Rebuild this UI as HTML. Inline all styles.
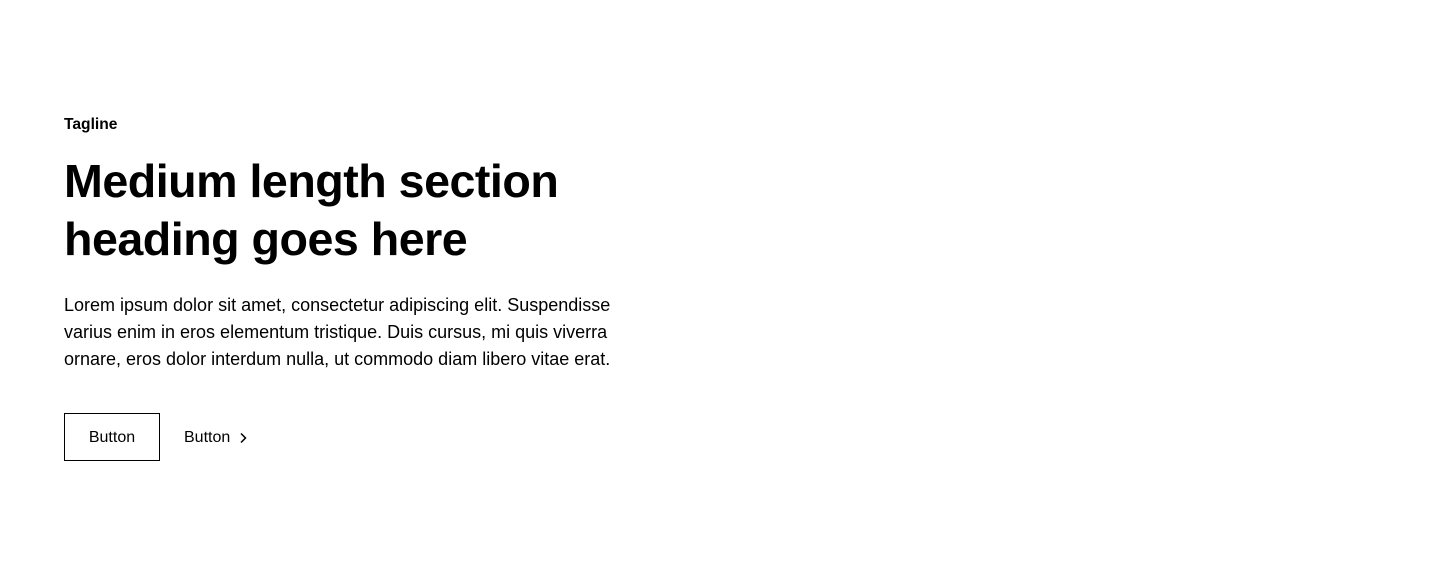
<!DOCTYPE html>
<html><head><meta charset="utf-8"><style>
html,body{margin:0;padding:0;background:#fff;width:1440px;height:573px;overflow:hidden;font-family:"Liberation Sans",Arial,sans-serif;color:#000}
.wrap{position:absolute;left:64px;top:113px}
.tag{font-size:15.6px;font-weight:bold;line-height:24px;margin:0 0 15px}
h1{font-size:46.6px;font-weight:bold;line-height:58px;margin:0 0 24px;white-space:nowrap;letter-spacing:-0.5px}
p{font-size:18px;line-height:27px;margin:0 0 40px;white-space:nowrap}
.btns{display:flex;align-items:center;gap:24px}
.b1{box-sizing:border-box;width:96px;height:48px;border:1px solid #000;display:flex;align-items:center;justify-content:center;font-size:16px;padding-top:1px}
.b2{display:flex;align-items:center;gap:5px;font-size:16px;padding-top:1px}
</style></head><body>
<div class="wrap">
<div class="tag">Tagline</div>
<h1>Medium length section<br>heading goes here</h1>
<p>Lorem ipsum dolor sit amet, consectetur adipiscing elit. Suspendisse<br>varius enim in eros elementum tristique. Duis cursus, mi quis viverra<br>ornare, eros dolor interdum nulla, ut commodo diam libero vitae erat.</p>
<div class="btns"><div class="b1">Button</div><div class="b2">Button <svg width="16" height="16" viewBox="0 0 16 16"><path d="M6 3.5L10.5 8L6 12.5" fill="none" stroke="#000" stroke-width="1.5"/></svg></div></div>
</div>
</body></html>
